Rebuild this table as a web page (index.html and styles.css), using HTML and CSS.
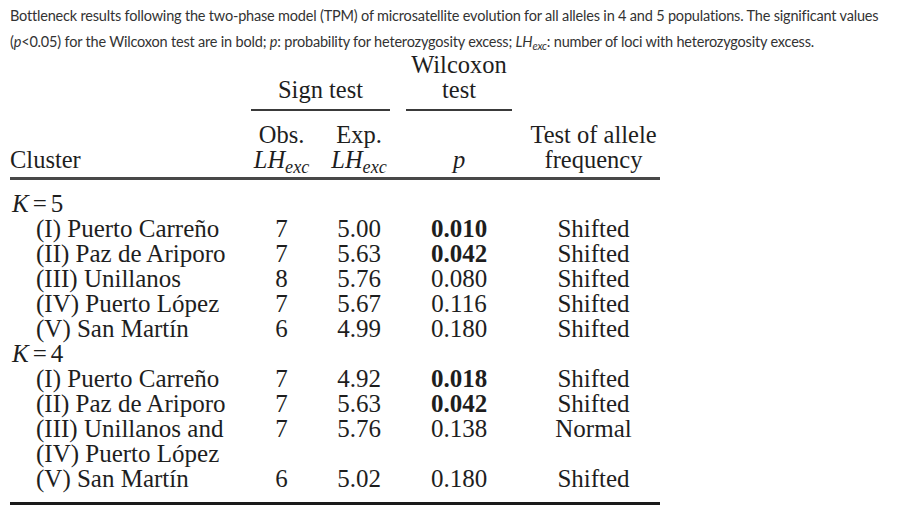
FILE: index.html
```html
<!DOCTYPE html>
<html lang="en">
<head>
<meta charset="utf-8">
<title>Bottleneck results (TPM)</title>
<link rel="stylesheet" href="styles.css">
</head>
<body>
<div class="caption">
  <span class="line">Bottleneck results following the two-phase model (TPM) of microsatellite evolution for all alleles in 4 and 5 populations. The significant values</span><br>
  <span class="line">(<i>p</i>&lt;0.05) for the Wilcoxon test are in bold; <i>p</i>: probability for heterozygosity excess; <i>LH<sub>exc</sub></i>: number of loci with heterozygosity excess.</span>
</div>
<table class="tpm">
  <colgroup>
    <col class="c-cluster">
    <col class="c-obs">
    <col class="c-exp">
    <col class="c-wil">
    <col class="c-freq">
  </colgroup>
  <thead>
    <tr class="h1">
      <th></th>
      <th colspan="2"><div class="grp grp-sign">Sign test</div></th>
      <th><div class="grp grp-wil">Wilcoxon<br>test</div></th>
      <th></th>
    </tr>
    <tr class="h2">
      <th class="cl">Cluster</th>
      <th>Obs.<br><i>LH<sub>exc</sub></i></th>
      <th>Exp.<br><i>LH<sub>exc</sub></i></th>
      <th><i>p</i></th>
      <th class="freq">Test of allele<br>frequency</th>
    </tr>
  </thead>
  <tbody>
    <tr class="k first"><td colspan="5"><i>K</i><span class="eq">=</span>5</td></tr>
    <tr><td class="pop">(I) Puerto Carreño</td><td>7</td><td>5.00</td><td><b>0.010</b></td><td class="freq">Shifted</td></tr>
    <tr><td class="pop">(II) Paz de Ariporo</td><td>7</td><td>5.63</td><td><b>0.042</b></td><td class="freq">Shifted</td></tr>
    <tr><td class="pop">(III) Unillanos</td><td>8</td><td>5.76</td><td>0.080</td><td class="freq">Shifted</td></tr>
    <tr><td class="pop">(IV) Puerto López</td><td>7</td><td>5.67</td><td>0.116</td><td class="freq">Shifted</td></tr>
    <tr><td class="pop">(V) San Martín</td><td>6</td><td>4.99</td><td>0.180</td><td class="freq">Shifted</td></tr>
    <tr class="k"><td colspan="5"><i>K</i><span class="eq">=</span>4</td></tr>
    <tr><td class="pop">(I) Puerto Carreño</td><td>7</td><td>4.92</td><td><b>0.018</b></td><td class="freq">Shifted</td></tr>
    <tr><td class="pop">(II) Paz de Ariporo</td><td>7</td><td>5.63</td><td><b>0.042</b></td><td class="freq">Shifted</td></tr>
    <tr><td class="pop">(III) Unillanos and<br>(IV) Puerto López</td><td>7</td><td>5.76</td><td>0.138</td><td class="freq">Normal</td></tr>
    <tr class="last"><td class="pop">(V) San Martín</td><td>6</td><td>5.02</td><td>0.180</td><td class="freq">Shifted</td></tr>
  </tbody>
</table>
</body>
</html>
```
FILE: styles.css
```css
html, body {
  margin: 0;
  padding: 0;
  background: #ffffff;
}

.caption {
  font-family: Lato, "Liberation Sans", sans-serif;
  font-size: 14.5px;
  letter-spacing: -0.19px;
  line-height: 26px;
  color: #333333;
  padding: 3px 0 0 10px;
  margin-bottom: -3px;
}

.caption .line {
  white-space: nowrap;
}

.caption sub {
  font-size: 0.75em;
  line-height: 0;
  vertical-align: -3px;
}

.tpm {
  margin-left: 10px;
  width: 650px;
  table-layout: fixed;
  border-collapse: separate;
  border-spacing: 0;
  font-family: "Liberation Serif", "Times New Roman", serif;
  font-size: 24.5px;
  line-height: 25px;
  color: #1e1e1e;
}

.c-cluster { width: 240px; }
.c-obs { width: 63px; }
.c-exp { width: 92px; }
.c-wil { width: 108px; }
.c-freq { width: 147px; }

.tpm th {
  font-weight: normal;
  text-align: center;
  vertical-align: bottom;
  padding: 0;
}

.tpm td {
  text-align: center;
  vertical-align: top;
  padding: 0;
  white-space: nowrap;
  font-size: 25px;
}

.tpm sub {
  font-size: 0.74em;
  line-height: 0;
  vertical-align: -5px;
}

.grp {
  border-bottom: 2px solid #3a3a3a;
  padding-bottom: 7px;
}

.grp-sign {
  margin: 0 15px 0 1px;
}

.grp-wil {
  margin: 0 1px;
}

.h2 th {
  padding: 11px 0 5px;
  border-bottom: 3px solid #484848;
}

.tpm th.cl {
  text-align: left;
}

.tpm .freq {
  padding-left: 14px;
}

.h2 th.freq {
  padding-left: 14px;
}

.k td {
  text-align: left;
  padding-left: 2px;
}

.k .eq {
  margin: 0 4px;
}

.first td {
  padding-top: 11px;
}

.tpm td.pop {
  text-align: left;
  padding-left: 26px;
}

.last td {
  padding-bottom: 11px;
  border-bottom: 3px solid #1a1a1a;
}
```
